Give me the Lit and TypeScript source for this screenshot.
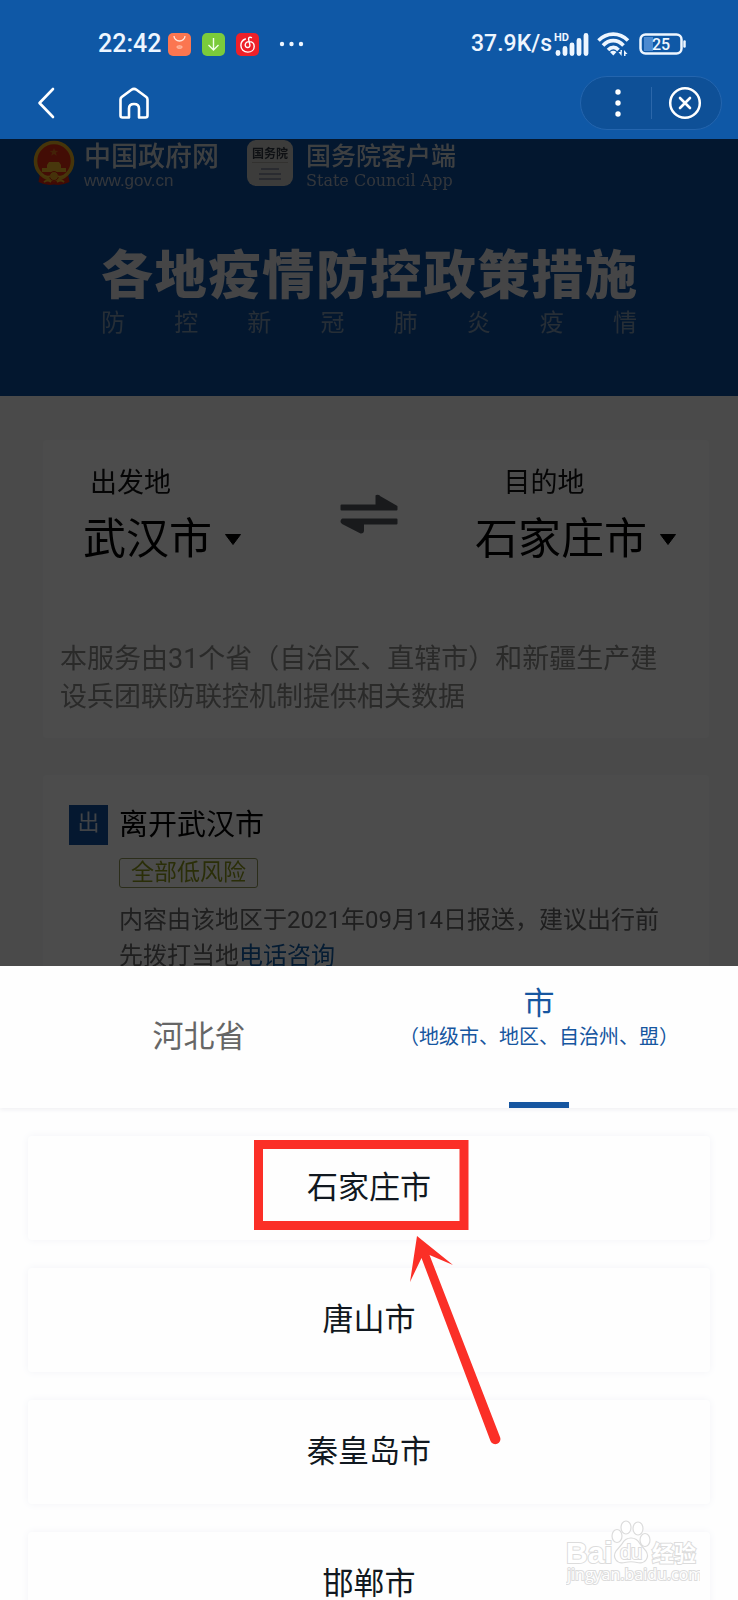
import { LitElement, html, css, svg } from "lit";
import { customElement, state } from "lit/decorators.js";
import { classMap } from "lit/directives/class-map.js";

@customElement("status-header")
class StatusHeader extends LitElement {
  static styles = css`
    :host {
      display: block;
      flex: none;
      background: #0f58a6;
      color: #eef6ff;
      padding: 25px 16px 9px 37px;
    }
    svg { display: block; fill: none; }
    .status {
      display: flex;
      justify-content: space-between;
      align-items: center;
      height: 38px;
      padding: 0 35px 0 61px;
      font-weight: 500;
    }
    .group { display: flex; align-items: center; }
    .clock { font-size: 25px; line-height: 38px; margin-right: 7px; }
    .speed { font-size: 23px; line-height: 38px; margin-right: 2px; }
    .apps { gap: 11px; }
    .more { margin-left: 11px; }
    .signal { margin-right: 7px; }
    .wifi { margin-right: 9px; }
    .tiny { font-size: 11px; font-weight: 700; fill: #eef6ff; }
    .level { font-size: 16px; font-weight: 500; fill: #eef6ff; }
    .nav {
      display: flex;
      align-items: center;
      justify-content: space-between;
      margin-top: 13px;
    }
    .left { gap: 62px; }
    button {
      border: 0;
      padding: 0;
      background: none;
      color: inherit;
      cursor: pointer;
    }
    .pill {
      box-sizing: border-box;
      display: flex;
      align-items: center;
      width: 142px;
      height: 54px;
      padding: 0 3px 0 4px;
      border: 1px solid #2465ae;
      border-radius: 27px;
      background: #0e5097;
    }
    .pill button { flex: 1; display: flex; justify-content: center; }
    .rule { width: 1px; height: 32px; background: #2b67aa; }
  `;

  render() {
    return html`
      <div class="status">
        <div class="group">
          <span class="clock">22:42</span>
          <div class="group apps">
            <svg width="23" height="23" viewBox="0 0 23 23">
              <rect width="23" height="23" rx="5" fill="#fb7650" />
              <path d="M6 3a5.500 5 0 0 0 11 0" stroke="#ffe6dc" stroke-width="1.300" />
              <ellipse cx="11.500" cy="14" rx="3" ry="1.800" fill="#ffc0a8" />
              <path d="M9.500 14h4" stroke="#fb7650" stroke-width=".7" />
            </svg>
            <svg width="23" height="23" viewBox="0 0 23 23">
              <rect width="23" height="23" rx="5" fill="#7bcb3b" />
              <path d="M11.500 5v12M6.500 12l5 5 5-5" stroke="#f2ffe8" stroke-width="1.400" />
            </svg>
            <svg width="23" height="23" viewBox="0 0 23 23">
              <rect width="23" height="23" rx="5" fill="#ee2029" />
              <path
                d="M15.500 4.600c-1.600-.9-3.200 0-2.900 1.700l1.300 5.600c.3 1.500-.8 2.600-2.200 2.600-1.600 0-2.600-1.200-2.500-2.700.2-2 1.900-3.200 4-3.200 3 0 5 2 5 4.800 0 3.300-2.700 5.700-6.400 5.700-4 0-6.900-2.900-6.900-6.600 0-3.100 1.700-5.500 4.500-6.500"
                stroke="#fff" stroke-width="1.400" stroke-linecap="round" />
            </svg>
          </div>
          <svg class="more" width="46" height="8" viewBox="0 0 46 8">
            <g fill="#eef6ff">
              <circle cx="12" cy="4" r="2.200" /><circle cx="21.500" cy="4" r="2.200" /><circle cx="31" cy="4" r="2.200" />
            </g>
          </svg>
        </div>
        <div class="group">
          <span class="speed">37.9K/s</span>
          <svg class="signal" width="36" height="24" viewBox="0 0 36 24">
            <text class="tiny" x="0" y="9">HD</text>
            <path
              d="M4 21.500v-1M11 21.500v-5M18 21.500v-8.500M25 21.500V8.500M32 21.500V3.500"
              stroke="#eef6ff" stroke-width="4.800" stroke-linecap="round" />
          </svg>
          <svg class="wifi" width="33" height="26" viewBox="0 0 33 26">
            <g stroke="#eef6ff" stroke-width="3.600">
              <path d="M1.500 9.500C10 1 22.500 1 31 9.500" />
              <path d="M6 14.500c6-6.500 14.500-6.500 20.500 0" />
              <path d="M11 19c3.500-3.500 7.500-3.500 10.500 0" />
            </g>
            <path d="M13 21q3.200-2.500 6.500 0l-3.200 3.500z" fill="#eef6ff" />
            <path d="M24.500 25l-3-4h2v-2h1.500zM27 19l3.500 4h-2v2H27z" fill="#eef6ff" />
          </svg>
          <svg width="48" height="22" viewBox="0 0 48 22">
            <rect x="5" y="4" width="9" height="14" fill="#4c8ad0" />
            <rect x="1.500" y="1.500" width="41" height="19" rx="5" stroke="#eef6ff" stroke-width="2.500" />
            <path d="M45.500 8.500v5" stroke="#eef6ff" stroke-width="2.500" stroke-linecap="round" />
            <text class="level" x="22" y="17" text-anchor="middle">25</text>
          </svg>
        </div>
      </div>
      <div class="nav">
        <div class="group left">
          <button aria-label="返回">
            <svg width="18" height="32" viewBox="0 0 18 32">
              <path d="M16 2L2.500 16 16 30" stroke="#fff" stroke-width="2.600" stroke-linecap="round" stroke-linejoin="round" />
            </svg>
          </button>
          <button aria-label="首页">
            <svg width="34" height="34" viewBox="0 0 34 34">
              <path
                d="M3.500 13.500q0-1.500 1.200-2.500L14.500 3.700q2.500-1.800 5 0l9.800 7.300q1.200 1 1.200 2.500V29.500q0 2-2 2h-6.500V22.500q0-4.500-5-4.500t-5 4.500v9H5.500q-2 0-2-2z"
                stroke="#fff" stroke-width="2.600" stroke-linejoin="round" />
            </svg>
          </button>
        </div>
        <div class="pill">
          <button aria-label="更多">
            <svg width="8" height="30" viewBox="0 0 8 30">
              <g fill="#fff"><circle cx="4" cy="4" r="2.700" /><circle cx="4" cy="15" r="2.700" /><circle cx="4" cy="26" r="2.700" /></g>
            </svg>
          </button>
          <span class="rule"></span>
          <button aria-label="关闭">
            <svg width="34" height="34" viewBox="0 0 34 34">
              <circle cx="17" cy="17" r="14.800" stroke="#fff" stroke-width="2.500" />
              <path d="M12 12l10 10M22 12L12 22" stroke="#fff" stroke-width="2.600" stroke-linecap="round" />
            </svg>
          </button>
        </div>
      </div>
    `;
  }
}

@customElement("policy-page")
class PolicyPage extends LitElement {
  static styles = css`
    :host {
      display: block;
      background: #f5f7f7;
      filter: brightness(0.3);
    }
    svg { display: block; fill: none; }
    h1, h2, p { margin: 0; font-weight: 400; }
    .banner {
      background: #0a4c9c;
      padding-bottom: 55px;
    }
    .logos {
      display: flex;
      align-items: flex-start;
      height: 48px;
      padding-left: 32px;
    }
    .brand { display: flex; flex-direction: column; color: #cfd4da; }
    .gov { margin: 0 28px 0 8px; }
    .council { margin-left: 13px; }
    .name { font-size: 27px; line-height: 36px; font-weight: 500; }
    .council .name { font-size: 25px; }
    .sub {
      font-family: "Liberation Sans", sans-serif;
      font-size: 17px;
      line-height: 12px;
      color: #a9b4c4;
    }
    .serif { font-family: "DejaVu Serif", "Liberation Serif", serif; font-size: 16px; }
    .icon-text { font-size: 12px; font-weight: 700; fill: #2e3640; }
    .title, .subtitle {
      margin: 0 101px;
      text-align: justify;
      text-align-last: justify;
    }
    .title {
      margin-top: 62px;
      font-size: 52px;
      line-height: 56px;
      font-weight: 900;
      color: #e6e6e8;
    }
    .subtitle {
      font-size: 24px;
      line-height: 36px;
      color: #7f98b4;
    }
    .card {
      margin: 44px 29px 0 43px;
      background: #fdfdfe;
      border-radius: 4px;
      box-shadow: 0 0 8px #f8f8fa;
    }
    .route { padding: 25px 32px 22px 17px; }
    .cities {
      display: grid;
      grid-template-columns: 1fr 58px 1fr;
      align-items: center;
    }
    .from { justify-self: start; padding-left: 23px; }
    .to { justify-self: end; }
    .place { display: flex; flex-direction: column; gap: 8px; }
    .label {
      font-size: 27px;
      line-height: 36px;
      padding-right: 64px;
      text-align: center;
      color: #111;
    }
    .city {
      display: flex;
      align-items: center;
      gap: 12px;
      border: 0;
      padding: 0;
      background: none;
      font-family: inherit;
      font-size: 43px;
      line-height: 60px;
      color: #000;
      cursor: pointer;
    }
    .swap { border: 0; padding: 0; background: none; cursor: pointer; }
    .note {
      margin-top: 71px;
      font-size: 27px;
      line-height: 38px;
      color: #8c8c8a;
    }
    .leave {
      display: grid;
      grid-template-columns: 39px 1fr;
      column-gap: 11px;
      margin-top: 37px;
      padding: 30px 32px 30px 26px;
    }
    .badge {
      background: #10509f;
      color: #d8dfe8;
      font-size: 22px;
      line-height: 36px;
      height: 40px;
      text-align: center;
    }
    .heading { font-size: 29px; line-height: 40px; height: 40px; color: #000; }
    .detail { grid-column: 2; }
    .tag {
      display: inline-block;
      box-sizing: border-box;
      height: 30px;
      margin-top: 13px;
      padding: 0 11px;
      border: 1px solid #8f9658;
      border-radius: 3px;
      font-size: 23px;
      line-height: 27px;
      color: #8d9a1c;
      vertical-align: top;
    }
    .report {
      margin-top: 14px;
      font-size: 24px;
      line-height: 36px;
      color: #666;
    }
    a { color: #125ca8; text-decoration: none; }
  `;

  private caret = html`<svg width="18" height="12" viewBox="0 0 18 12">
    <path d="M1.500 1.500h15L9 11.500z" fill="#000" stroke="#000" stroke-linejoin="round" />
  </svg>`;

  render() {
    return html`
      <header class="banner">
        <div class="logos">
          <svg width="44" height="47" viewBox="0 0 44 47">
            <path d="M8 35h28l1.500 8q-8 4-15.500 2.500Q14 47 6.500 43z" fill="#d8200c" />
            <circle cx="22" cy="22" r="18.500" fill="#e02a10" stroke="#e8b020" stroke-width="3.600" />
            <path d="M22 9l1.200 2.700 3 .2-2.300 1.900.8 2.900-2.700-1.600-2.700 1.600.8-2.900-2.300-1.900 3-.2z" fill="#e07018" />
            <path d="M15 26l2-3h10l2 3v3h5v4H10v-4h5z" fill="#f0b828" />
            <circle cx="22" cy="37" r="4.500" fill="#e8a820" stroke="#d8200c" stroke-width="1" />
            <path d="M9 35q6 4 9 2M35 35q-6 4-9 2M12 43q4-3 7 0M25 43q4-3 7 0" stroke="#f0b828" stroke-width="1.800" />
          </svg>
          <div class="brand gov">
            <span class="name">中国政府网</span>
            <span class="sub">www.gov.cn</span>
          </div>
          <svg width="46" height="47" viewBox="0 0 46 47">
            <rect y="1" width="46" height="46" rx="9" fill="#c9c9c6" />
            <text class="icon-text" x="23" y="19" text-anchor="middle">国务院</text>
            <path d="M5 23.500h36" stroke="#a8a39c" stroke-width="1.200" />
            <path d="M14 30h18M12 35h22M12 40h22" stroke="#8d90a0" stroke-width="2" />
          </svg>
          <div class="brand council">
            <span class="name">国务院客户端</span>
            <span class="sub serif">State Council App</span>
          </div>
        </div>
        <h1 class="title">各地疫情防控政策措施</h1>
        <p class="subtitle">防控新冠肺炎疫情</p>
      </header>

      <section class="card route">
        <div class="cities">
          <div class="place from">
            <span class="label" id="from-label">出发地</span>
            <button class="city" aria-haspopup="listbox" aria-describedby="from-label">武汉市${this.caret}</button>
          </div>
          <button class="swap" aria-label="交换">
            <svg width="58" height="46" viewBox="0 0 58 46">
              <g fill="#54585e" stroke="#54585e" stroke-width="2" stroke-linejoin="round">
                <path d="M1.500 11.500h35V2q2-1 3.500 1l16.500 9.500v3h-55z" />
                <path d="M56.500 29.500v-4h-54q-2 2 0 3.500L21 38.500q2 0 2-2v-7z" />
              </g>
            </svg>
          </button>
          <div class="place to">
            <span class="label" id="to-label">目的地</span>
            <button class="city" aria-haspopup="listbox" aria-describedby="to-label">石家庄市${this.caret}</button>
          </div>
        </div>
        <p class="note">本服务由31个省（自治区、直辖市）和新疆生产建设兵团联防联控机制提供相关数据</p>
      </section>

      <section class="card leave">
        <span class="badge">出</span>
        <h2 class="heading">离开武汉市</h2>
        <div class="detail">
          <span class="tag">全部低风险</span>
          <p class="report">
            内容由该地区于2021年09月14日报送，建议出行前先拨打当地<a href="#phone">电话咨询</a>
          </p>
        </div>
      </section>
    `;
  }
}

@customElement("city-sheet")
class CitySheet extends LitElement {
  static styles = css`
    :host { display: block; flex: none; background: #fefefe; }
    button {
      border: 0;
      padding: 0;
      font-family: inherit;
      cursor: pointer;
    }
    .tabs {
      display: grid;
      grid-template-columns: 1fr 1fr;
      height: 142px;
      padding: 0 29px;
      box-shadow: 0 2px 4px #f1f1f4;
    }
    .tab {
      display: flex;
      flex-direction: column;
      align-items: center;
      background: none;
      color: #666;
      font-size: 31px;
      line-height: 40px;
    }
    .single { padding-top: 51px; }
    .active { color: #1656a0; padding-top: 18px; }
    .hint { font-size: 20px; line-height: 26px; white-space: nowrap; }
    .bar { width: 60px; height: 6px; margin-top: auto; background: #1656a0; }
    .list {
      list-style: none;
      margin: 0;
      padding: 28px 28px 0;
      display: flex;
      flex-direction: column;
      gap: 28px;
      height: 464px;
      overflow: hidden;
    }
    .item { position: relative; flex: none; }
    .option {
      display: block;
      width: 100%;
      height: 104px;
      border-radius: 4px;
      background: #fefefe;
      box-shadow: 0 0 8px #f3f4f8;
      font-size: 31px;
      line-height: 40px;
      color: #111820;
    }
    .mark {
      position: absolute;
      z-index: 1;
      left: 50%;
      top: 4px;
      margin-left: -115px;
      pointer-events: none;
    }
  `;

  @state() private cities = ["石家庄市", "唐山市", "秦皇岛市", "邯郸市"];

  private mark = html`
    <svg class="mark" width="250" height="310" viewBox="0 0 250 310" aria-hidden="true">
      <rect x="4.500" y="4.500" width="205.500" height="81" fill="none" stroke="#fb2f27" stroke-width="9" />
      <path
        d="M163 96L199 125 175.500 115 246 297A4.800 4.800 0 0 1 236.500 301L167.500 118 156 142z"
        fill="#fb2f27" />
    </svg>
  `;

  render() {
    return html`
      <div class="tabs" role="tablist">
        <button class="tab single" role="tab" aria-selected="false">河北省</button>
        <button class=${classMap({ tab: true, active: true })} role="tab" aria-selected="true">
          <span>市</span>
          <span class="hint">（地级市、地区、自治州、盟）</span>
          <span class="bar"></span>
        </button>
      </div>
      <ul class="list">
        ${this.cities.map(
          (city, i) => html`<li class="item">
            <button class="option">${city}</button>
            ${i === 0 ? this.mark : ""}
          </li>`
        )}
      </ul>
    `;
  }
}

@customElement("app-root")
class AppRoot extends LitElement {
  static styles = css`
    :host {
      position: relative;
      display: flex;
      flex-direction: column;
      height: 100vh;
      overflow: hidden;
      font-family: Roboto, "Noto Sans CJK SC", sans-serif;
    }
    .backdrop { flex: 1 1 0; min-height: 0; overflow: hidden; }
    .watermark {
      position: absolute;
      right: 38px;
      bottom: 12px;
      z-index: 2;
      pointer-events: none;
    }
    .wm {
      fill: #fff;
      stroke: #dcdcdc;
      stroke-width: 2px;
      paint-order: stroke;
      font-weight: 700;
    }
    .big { font-family: "Liberation Sans", sans-serif; font-size: 30px; }
    .du { font-family: "Liberation Sans", sans-serif; font-size: 20px; font-weight: 400; }
    .cn { font-size: 22px; }
    .url { font-family: "Open Sans", sans-serif; font-size: 16px; font-weight: 400; }
  `;

  private watermark = svg`
    <text class="wm big" x="0" y="43">Bai</text>
    <g fill="#fff" stroke="#dcdcdc" stroke-width="1.200">
      <ellipse cx="51" cy="16" rx="5" ry="6.500" />
      <ellipse cx="60" cy="7.500" rx="5" ry="6.500" />
      <ellipse cx="72" cy="8.500" rx="5" ry="6.500" />
      <ellipse cx="79" cy="20" rx="5" ry="6.500" />
      <path d="M65 18q6 0 9 6l6 7q3 5 0 9-3 4-9 2.500-6-1.500-12 0-6 1.500-9-2.500-3-4 0-9l6-7q3-6 9-6z" />
    </g>
    <text class="wm du" x="54" y="39">du</text>
    <text class="wm cn" x="86" y="41">经验</text>
    <text class="wm url" x="1" y="60">jingyan.baidu.com</text>
  `;

  render() {
    return html`
      <status-header></status-header>
      <div class="backdrop"><policy-page></policy-page></div>
      <city-sheet></city-sheet>
      <svg class="watermark" width="134" height="68" viewBox="0 0 134 68">${this.watermark}</svg>
    `;
  }
}
